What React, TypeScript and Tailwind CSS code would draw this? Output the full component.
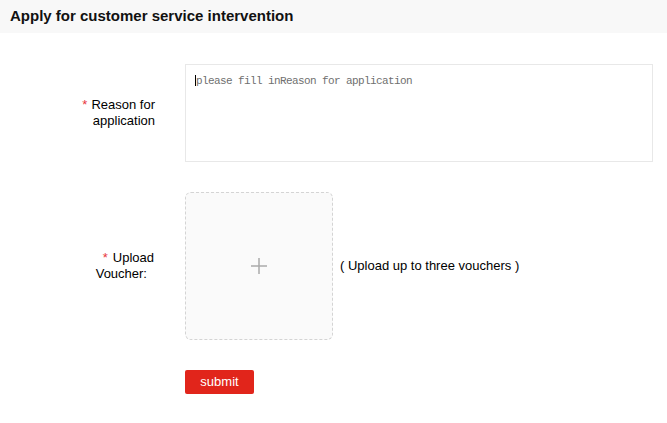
import React from 'react';

const labelFont = { fontFamily: '"Liberation Sans", Arial, "Noto Sans CJK SC", sans-serif' };

export default function App() {
  return (
    <div className="w-[667px] h-[423px] bg-white text-black" style={labelFont}>
      {/* Page header */}
      <div className="h-[33px] bg-[#f8f8f8] pl-[10px] flex items-center">
        <h1 className="text-[15px] font-bold text-[#111]">
          Apply for customer service intervention
        </h1>
      </div>

      <form className="pt-[31px]">
        {/* Reason for application */}
        <div className="flex items-center">
          <label className="w-[155px] shrink-0 text-right text-[13px] leading-[16px] pl-[70px]">
            <span className="text-[#e8363c] mr-[4px]">*</span>Reason for application
          </label>
          <div className="relative ml-[30px]">
            <textarea
              placeholder="please fill inReason for application"
              className="block w-[468px] h-[98px] resize-none border border-[#e8e8e8] bg-white px-[10px] py-[8px] text-[11px] tracking-[-0.6px] leading-[16px] text-[#333] placeholder:text-[#6f6f6f] outline-none"
              style={{ fontFamily: '"Liberation Mono", "Courier New", monospace' }}
            />
            <span className="absolute left-[10px] top-[11px] w-[1px] h-[11px] bg-black" />
          </div>
        </div>

        {/* Upload voucher */}
        <div className="flex items-center mt-[30px]">
          <div className="w-[155px] shrink-0 flex flex-col items-end text-[13px] leading-[16px] pr-[1px]">
            <span>
              <span className="text-[#e8363c] mr-[5px]">*</span>Upload
            </span>
            <span className="mr-[7px]">Voucher:</span>
          </div>
          <div className="ml-[30px] w-[148px] h-[148px] rounded-[6px] border border-dashed border-[#d4d4d4] bg-[#fafafa] flex items-center justify-center cursor-pointer">
            <svg width="18" height="18" viewBox="0 0 18 18" className="text-[#aaa]">
              <path d="M9 1v16M1 9h16" stroke="currentColor" strokeWidth="1.5" fill="none" />
            </svg>
          </div>
          <span className="ml-[7px] text-[13px]">( Upload up to three vouchers )</span>
        </div>

        {/* Submit */}
        <div className="pl-[185px] mt-[29px]">
          <button
            type="button"
            className="w-[69px] h-[24px] rounded-[2px] bg-[#e1251b] text-white text-[13px] leading-[24px]"
          >
            submit
          </button>
        </div>
      </form>
    </div>
  );
}
